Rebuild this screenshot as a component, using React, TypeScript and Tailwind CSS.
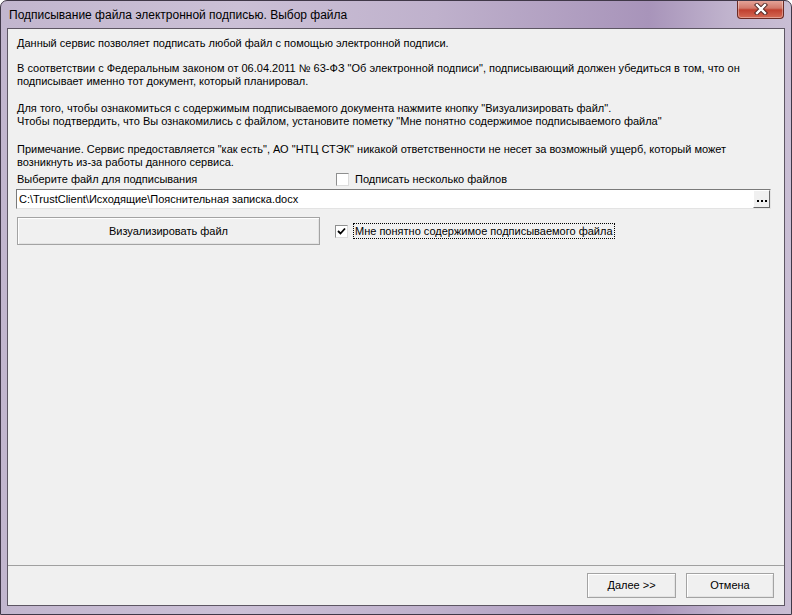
const font = "font-['Liberation_Sans','Arial',sans-serif]";

function CheckBox({ checked }: { checked?: boolean }) {
  return (
    <span className="flex h-[13px] w-[13px] shrink-0 items-center justify-center border border-t-[#8e8f8f] border-l-[#8e8f8f] border-b-[#dcdcdc] border-r-[#dcdcdc] bg-white">
      {checked && (
        <svg width="9" height="9" viewBox="0 0 9 9">
          <path d="M1 4 L3.5 6.5 L8 1.5" stroke="#000" strokeWidth="1.8" fill="none" />
        </svg>
      )}
    </span>
  );
}

function Btn({ className, children }: { className?: string; children: React.ReactNode }) {
  return (
    <button
      type="button"
      className={`flex items-center justify-center border border-[#a3a3a3] bg-[#f0f0f0] text-[11px] text-black shadow-[inset_1px_1px_0_#fff,inset_-1px_-1px_0_#e3e3e3] ${className ?? ""}`}
    >
      {children}
    </button>
  );
}

export default function App() {
  return (
    <div className={`${font} flex h-[615px] w-[792px] flex-col overflow-hidden rounded-t-[7px] border border-[#403848] bg-[linear-gradient(to_right,#c2b6ce,#cbc0d6_30%,#bfb1cc_55%,#a894ba_82%,#c0b3cd_92%,#c9bed4)] px-[6px] pb-[8px]`}>
      {/* title bar */}
      <div className="flex h-[27px] shrink-0 items-start justify-between">
        <div className="pl-[2px] pt-[7px] text-[12px] leading-[14px] text-black">
          Подписывание файла электронной подписью. Выбор файла
        </div>
        <div className="-mt-px mr-px flex h-[19px] w-[47px] items-center justify-center rounded-b-[4px] border border-t-0 border-[#6b2a24] bg-[linear-gradient(to_bottom,#e7a89d,#d2796b_45%,#c0402f_55%,#d46a55)] shadow-[inset_0_0_0_1px_rgba(255,255,255,0.35)]">
          <svg width="14" height="12" viewBox="0 0 14 12">
            <path d="M3 2 L11 10 M11 2 L3 10" stroke="#4a2220" strokeWidth="4.2" strokeLinecap="square" />
            <path d="M3 2 L11 10 M11 2 L3 10" stroke="#fff" strokeWidth="2.4" strokeLinecap="square" />
          </svg>
        </div>
      </div>

      {/* client area */}
      <div className="flex flex-1 flex-col border border-[#5d5663] bg-[#f0f0f0] text-[11px] leading-[13px] text-black">
        <div className="flex flex-col pl-[9px] pt-[8px]">
          <p>Данный сервис позволяет подписать любой файл с помощью электронной подписи.</p>
          <p className="mt-[12px] whitespace-nowrap">
            В соответствии с Федеральным законом от 06.04.2011 № 63-ФЗ "Об электронной подписи", подписывающий должен убедиться в том, что он
            <br />
            подписывает именно тот документ, который планировал.
          </p>
          <p className="mt-[14px] whitespace-nowrap">
            Для того, чтобы ознакомиться с содержимым подписываемого документа нажмите кнопку "Визуализировать файл".
            <br />
            Чтобы подтвердить, что Вы ознакомились с файлом, установите пометку "Мне понятно содержимое подписываемого файла"
          </p>
          <p className="mt-[15px] whitespace-nowrap">
            Примечание. Сервис предоставляется "как есть", АО "НТЦ СТЭК" никакой ответственности не несет за возможный ущерб, который может
            <br />
            возникнуть из-за работы данного сервиса.
          </p>

          <div className="mt-[4px] flex items-center">
            <span className="w-[319px]">Выберите файл для подписывания</span>
            <span className="flex items-center gap-[6px]">
              <CheckBox />
              <span>Подписать несколько файлов</span>
            </span>
          </div>
        </div>

        <div className="ml-[8px] mr-[13px] mt-[3px] flex h-[20px] items-center border border-t-[#7a7a7a] border-l-[#7a7a7a] border-b-[#e3e3e3] border-r-[#e3e3e3] bg-white">
          <span className="flex-1 pl-[2px]">C:\TrustClient\Исходящие\Пояснительная записка.docx</span>
          <span className="flex h-[18px] w-[17px] items-center justify-center gap-[2px] border border-t-white border-l-white border-b-[#696969] border-r-[#696969] bg-[#f0f0f0] pt-[3px]">
            <span className="h-[2px] w-[2px] bg-black" />
            <span className="h-[2px] w-[2px] bg-black" />
            <span className="h-[2px] w-[2px] bg-black" />
          </span>
        </div>

        <div className="ml-[9px] mt-[8px] flex items-center">
          <Btn className="h-[28px] w-[303px]">Визуализировать файл</Btn>
          <span className="ml-[15px] flex items-center gap-[5px]">
            <CheckBox checked />
            <span className="border border-dotted border-black px-px leading-[14px]">
              Мне понятно содержимое подписываемого файла
            </span>
          </span>
        </div>

        <div className="flex-1" />

        <div className="flex justify-end gap-[10px] border-t border-[#a0a0a0] px-[10px] pb-[7px] pt-[7px]">
          <Btn className="h-[25px] w-[89px]">Далее &gt;&gt;</Btn>
          <Btn className="h-[25px] w-[88px]">Отмена</Btn>
        </div>
      </div>
    </div>
  );
}
